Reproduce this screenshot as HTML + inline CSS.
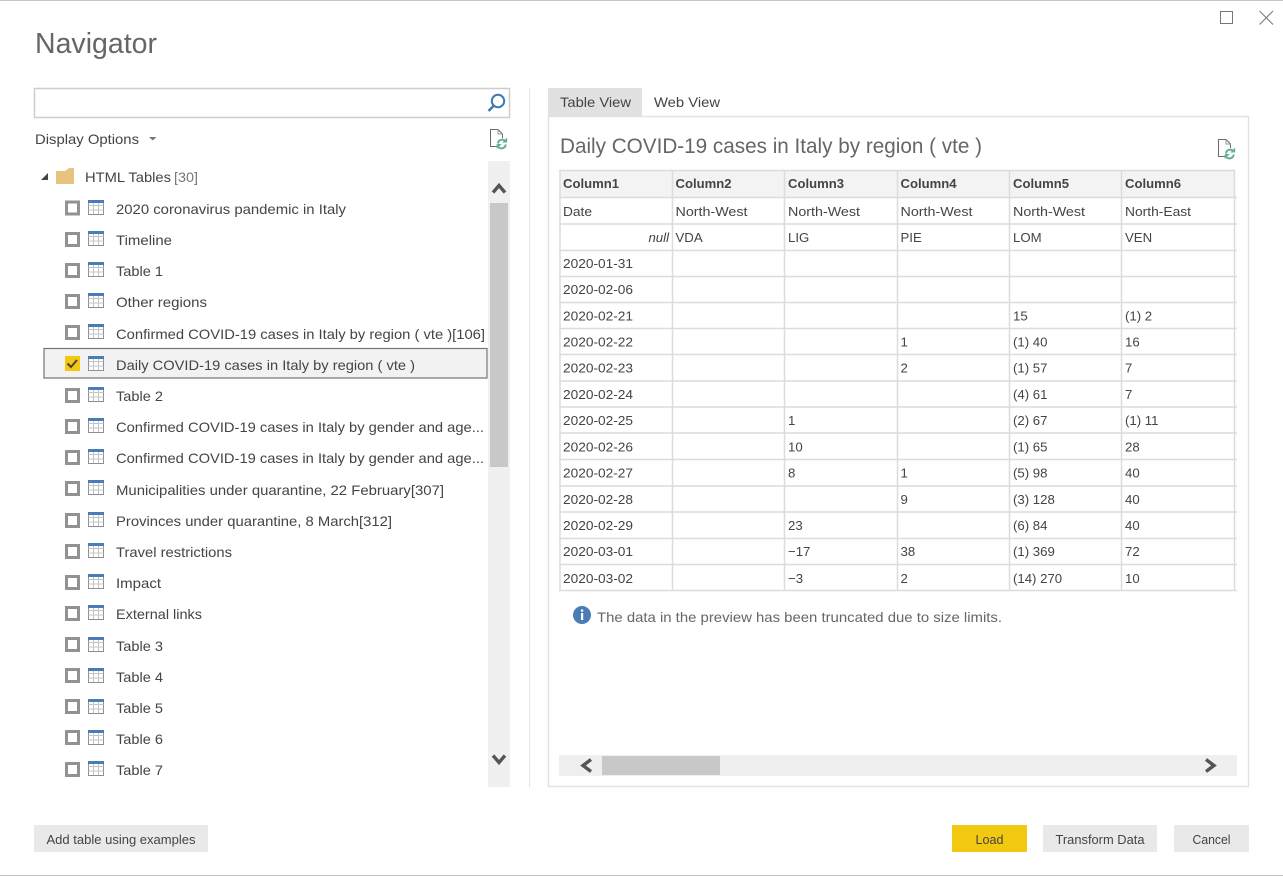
<!DOCTYPE html>
<html lang="en"><head><meta charset="utf-8"><title>Navigator</title>
<style>
html,body{margin:0;padding:0;background:#fff;overflow:hidden}
svg{display:block}
text{font-family:"Liberation Sans",sans-serif;fill:#444}
.l{font-size:14px}
.t text{font-size:13.2px;fill:#444}
.h text{font-size:12.5px;font-weight:bold;fill:#444}
.b{font-size:12.5px;text-anchor:middle;fill:#444}
.g{stroke:#dcdcdc;stroke-width:1.5;fill:none}
</style></head><body>
<svg width="1283" height="876" viewBox="0 0 1283 876" xmlns="http://www.w3.org/2000/svg">
<defs>
<g id="cb"><rect x="66.5" y="-6.5" width="12" height="12" fill="#fff" stroke="#929292" stroke-width="3"/></g>
<g id="ti"><rect x="88.5" y="-7.5" width="15" height="14" fill="#fff" stroke="#8f8f8f"/><path d="M88.5-2.500h15M88.5 2h15M93.500-6v12M98.500-6v12" stroke="#c4c4c4" fill="none"/><rect x="88" y="-8" width="16" height="3" fill="#4a7db5"/></g>
<g id="rf"><path d="M7 17.500H.5V.5H8L12.500 5V9" fill="none" stroke="#6a6a6a"/><path d="M8 .5V5h4.500" fill="none" stroke="#9a9a9a"/><path d="M8 14.500a4.200 4.200 0 0 1 7.300-2.500M15.700 15.500a4.200 4.200 0 0 1-7.300 2.500" fill="none" stroke="#63b095" stroke-width="2"/><path d="M17.200 8.500v5h-5zM6.700 20v-5h5z" fill="#63b095"/></g>
</defs>
<rect x="0" y="0" width="1283" height="1" fill="#c8c8c8"/>
<rect x="0" y="875" width="1283" height="1" fill="#c0c0c0"/>
<text x="35" y="53" style="font-size:29px;fill:#666" textLength="122" lengthAdjust="spacingAndGlyphs">Navigator</text>
<rect x="1220.500" y="11.500" width="12" height="12" fill="none" stroke="#777"/>
<path d="M1259.500 11l13.500 13.500M1273 11l-13.500 13.500" stroke="#777" fill="none"/>
<rect x="34.500" y="88.500" width="475" height="29" fill="#fff" stroke="#cdcdcd" stroke-width="1.500"/>
<circle cx="498" cy="101" r="6.200" fill="none" stroke="#3f7ab0" stroke-width="2"/><path d="M493.500 106l-5 5" stroke="#3f7ab0" stroke-width="2.600" fill="none"/>
<text class="l" x="35" y="144" textLength="104" lengthAdjust="spacingAndGlyphs">Display Options</text>
<path d="M149 137h7.500l-3.750 3.500z" fill="#777"/>
<use href="#rf" x="490" y="129"/>
<path d="M48 173v7h-7z" fill="#444"/>
<path d="M56 184v-13h9l4-3h5v16z" fill="#e8c27f"/>
<text class="l" x="85" y="182" textLength="86" lengthAdjust="spacingAndGlyphs">HTML Tables</text>
<text class="l" x="174" y="182" textLength="24" lengthAdjust="spacingAndGlyphs" style="fill:#777">[30]</text>

<rect x="44" y="348.500" width="443" height="29.500" fill="#f2f2f2" stroke="#747474" stroke-width="1.200"/>

<use href="#cb" y="208.500"/><use href="#ti" y="208"/><text class="l" x="116" y="214" textLength="230" lengthAdjust="spacingAndGlyphs">2020 coronavirus pandemic in Italy</text>
<use href="#cb" y="240"/><use href="#ti" y="239"/><text class="l" x="116" y="245" textLength="56" lengthAdjust="spacingAndGlyphs">Timeline</text>
<use href="#cb" y="271"/><use href="#ti" y="270"/><text class="l" x="116" y="276" textLength="47" lengthAdjust="spacingAndGlyphs">Table 1</text>
<use href="#cb" y="302"/><use href="#ti" y="301"/><text class="l" x="116" y="307" textLength="91" lengthAdjust="spacingAndGlyphs">Other regions</text>
<use href="#cb" y="333"/><use href="#ti" y="332"/><text class="l" x="116" y="339" textLength="369" lengthAdjust="spacingAndGlyphs">Confirmed COVID-19 cases in Italy by region ( vte )[106]</text>
<rect x="65" y="356" width="15" height="15" fill="#f2c811"/><path d="M67.500 363.500l3.500 3.500 6-7" fill="none" stroke="#444" stroke-width="2"/><use href="#ti" y="364"/><text class="l" x="116" y="370" textLength="299" lengthAdjust="spacingAndGlyphs">Daily COVID-19 cases in Italy by region ( vte )</text>
<use href="#cb" y="396"/><use href="#ti" y="395"/><text class="l" x="116" y="401" textLength="47" lengthAdjust="spacingAndGlyphs">Table 2</text>
<use href="#cb" y="427"/><use href="#ti" y="426"/><text class="l" x="116" y="432" textLength="368" lengthAdjust="spacingAndGlyphs">Confirmed COVID-19 cases in Italy by gender and age...</text>
<use href="#cb" y="458"/><use href="#ti" y="457"/><text class="l" x="116" y="463" textLength="368" lengthAdjust="spacingAndGlyphs">Confirmed COVID-19 cases in Italy by gender and age...</text>
<use href="#cb" y="489"/><use href="#ti" y="488"/><text class="l" x="116" y="495" textLength="328" lengthAdjust="spacingAndGlyphs">Municipalities under quarantine, 22 February[307]</text>
<use href="#cb" y="521"/><use href="#ti" y="520"/><text class="l" x="116" y="526" textLength="276" lengthAdjust="spacingAndGlyphs">Provinces under quarantine, 8 March[312]</text>
<use href="#cb" y="552"/><use href="#ti" y="551"/><text class="l" x="116" y="557" textLength="116" lengthAdjust="spacingAndGlyphs">Travel restrictions</text>
<use href="#cb" y="583"/><use href="#ti" y="582"/><text class="l" x="116" y="588" textLength="45" lengthAdjust="spacingAndGlyphs">Impact</text>
<use href="#cb" y="614"/><use href="#ti" y="613"/><text class="l" x="116" y="619" textLength="86" lengthAdjust="spacingAndGlyphs">External links</text>
<use href="#cb" y="645"/><use href="#ti" y="645"/><text class="l" x="116" y="651" textLength="47" lengthAdjust="spacingAndGlyphs">Table 3</text>
<use href="#cb" y="676"/><use href="#ti" y="676"/><text class="l" x="116" y="682" textLength="47" lengthAdjust="spacingAndGlyphs">Table 4</text>
<use href="#cb" y="707"/><use href="#ti" y="707"/><text class="l" x="116" y="713" textLength="47" lengthAdjust="spacingAndGlyphs">Table 5</text>
<use href="#cb" y="738"/><use href="#ti" y="738"/><text class="l" x="116" y="744" textLength="47" lengthAdjust="spacingAndGlyphs">Table 6</text>
<use href="#cb" y="770"/><use href="#ti" y="769"/><text class="l" x="116" y="775" textLength="47" lengthAdjust="spacingAndGlyphs">Table 7</text>

<rect x="488" y="161" width="22" height="626" fill="#f0f0f0"/>
<rect x="490" y="203" width="18" height="264" fill="#c8c8c8"/>
<path d="M493 192.500l6-7 6 7" fill="none" stroke="#555" stroke-width="3.400"/>
<path d="M493 755.500l6 7 6-7" fill="none" stroke="#555" stroke-width="3.400"/>

<rect x="529" y="88" width="1" height="699" fill="#e6e6e6"/>
<rect x="548.500" y="116.500" width="700" height="670" fill="#fff" stroke="#e2e2e2" stroke-width="1.500"/>
<rect x="548" y="88" width="94" height="29" fill="#e1e1e1"/>
<text class="l" x="560" y="107" textLength="71" lengthAdjust="spacingAndGlyphs">Table View</text>
<text class="l" x="654" y="107" textLength="66" lengthAdjust="spacingAndGlyphs">Web View</text>
<text x="560" y="153" style="font-size:21px;fill:#666" textLength="422" lengthAdjust="spacingAndGlyphs">Daily COVID-19 cases in Italy by region ( vte )</text>
<use href="#rf" x="1218" y="139"/>

<rect x="560" y="170" width="675" height="27" fill="#f3f3f3"/>
<path class="g" d="M559 170.500H1235M559 197.500H1237M559 224H1237M559 250.500H1237M559 276.500H1237M559 302.500H1237M559 328.500H1237M559 354.500H1237M559 381H1237M559 407H1237M559 433H1237M559 459.500H1237M559 486H1237M559 512H1237M559 538.500H1237M559 564.500H1237M559 590.500H1237"/>
<path class="g" d="M560 170V591M672.500 170V591M784.500 170V591M897.500 170V591M1009.500 170V591M1121.500 170V591M1234.500 170V591"/>
<g class="h">
<text x="563" y="188" textLength="56" lengthAdjust="spacingAndGlyphs">Column1</text>
<text x="675.500" y="188" textLength="56" lengthAdjust="spacingAndGlyphs">Column2</text>
<text x="788" y="188" textLength="56" lengthAdjust="spacingAndGlyphs">Column3</text>
<text x="900.500" y="188" textLength="56" lengthAdjust="spacingAndGlyphs">Column4</text>
<text x="1013" y="188" textLength="56" lengthAdjust="spacingAndGlyphs">Column5</text>
<text x="1125" y="188" textLength="56" lengthAdjust="spacingAndGlyphs">Column6</text>
</g>
<g class="t">
<text x="563" y="216" textLength="29" lengthAdjust="spacingAndGlyphs">Date</text>
<text x="675.500" y="216" textLength="72" lengthAdjust="spacingAndGlyphs">North-West</text>
<text x="788" y="216" textLength="72" lengthAdjust="spacingAndGlyphs">North-West</text>
<text x="900.500" y="216" textLength="72" lengthAdjust="spacingAndGlyphs">North-West</text>
<text x="1013" y="216" textLength="72" lengthAdjust="spacingAndGlyphs">North-West</text>
<text x="1125" y="216" textLength="66" lengthAdjust="spacingAndGlyphs">North-East</text>
<text x="669" y="242" text-anchor="end" style="font-style:italic">null</text>
<text x="675.500" y="242">VDA</text><text x="788" y="242">LIG</text><text x="900.500" y="242">PIE</text><text x="1013" y="242">LOM</text><text x="1125" y="242">VEN</text>
<text x="563" y="268" textLength="70" lengthAdjust="spacingAndGlyphs">2020-01-31</text>
<text x="563" y="294" textLength="70" lengthAdjust="spacingAndGlyphs">2020-02-06</text>
<text x="563" y="320.500" textLength="70" lengthAdjust="spacingAndGlyphs">2020-02-21</text><text x="1013" y="320.500">15</text><text x="1125" y="320.500">(1) 2</text>
<text x="563" y="346.500" textLength="70" lengthAdjust="spacingAndGlyphs">2020-02-22</text><text x="900.500" y="346.500">1</text><text x="1013" y="346.500">(1) 40</text><text x="1125" y="346.500">16</text>
<text x="563" y="372.500" textLength="70" lengthAdjust="spacingAndGlyphs">2020-02-23</text><text x="900.500" y="372.500">2</text><text x="1013" y="372.500">(1) 57</text><text x="1125" y="372.500">7</text>
<text x="563" y="399" textLength="70" lengthAdjust="spacingAndGlyphs">2020-02-24</text><text x="1013" y="399">(4) 61</text><text x="1125" y="399">7</text>
<text x="563" y="425" textLength="70" lengthAdjust="spacingAndGlyphs">2020-02-25</text><text x="788" y="425">1</text><text x="1013" y="425">(2) 67</text><text x="1125" y="425">(1) 11</text>
<text x="563" y="451.500" textLength="70" lengthAdjust="spacingAndGlyphs">2020-02-26</text><text x="788" y="451.500">10</text><text x="1013" y="451.500">(1) 65</text><text x="1125" y="451.500">28</text>
<text x="563" y="477.500" textLength="70" lengthAdjust="spacingAndGlyphs">2020-02-27</text><text x="788" y="477.500">8</text><text x="900.500" y="477.500">1</text><text x="1013" y="477.500">(5) 98</text><text x="1125" y="477.500">40</text>
<text x="563" y="504" textLength="70" lengthAdjust="spacingAndGlyphs">2020-02-28</text><text x="900.500" y="504">9</text><text x="1013" y="504">(3) 128</text><text x="1125" y="504">40</text>
<text x="563" y="530" textLength="70" lengthAdjust="spacingAndGlyphs">2020-02-29</text><text x="788" y="530">23</text><text x="1013" y="530">(6) 84</text><text x="1125" y="530">40</text>
<text x="563" y="556" textLength="70" lengthAdjust="spacingAndGlyphs">2020-03-01</text><text x="788" y="556">−17</text><text x="900.500" y="556">38</text><text x="1013" y="556">(1) 369</text><text x="1125" y="556">72</text>
<text x="563" y="583" textLength="70" lengthAdjust="spacingAndGlyphs">2020-03-02</text><text x="788" y="583">−3</text><text x="900.500" y="583">2</text><text x="1013" y="583">(14) 270</text><text x="1125" y="583">10</text>
</g>
<circle cx="582" cy="615" r="9" fill="#4a7db5"/>
<rect x="581" y="613" width="2.200" height="7" fill="#fff"/><rect x="581" y="609.500" width="2.200" height="2.200" fill="#fff"/>
<text class="l" x="597" y="622" textLength="405" lengthAdjust="spacingAndGlyphs" style="fill:#666">The data in the preview has been truncated due to size limits.</text>

<rect x="559" y="755" width="678" height="21" fill="#efefef"/>
<rect x="602" y="756" width="118" height="19" fill="#c8c8c8"/>
<path d="M591 759.500l-8 6 8 6" fill="none" stroke="#555" stroke-width="3.400"/>
<path d="M1206 759.500l8 6-8 6" fill="none" stroke="#555" stroke-width="3.400"/>

<rect x="34" y="825" width="174" height="27" fill="#e9e9e9"/>
<text class="b" x="121" y="844" textLength="149" lengthAdjust="spacingAndGlyphs">Add table using examples</text>
<rect x="952" y="825" width="75" height="27" fill="#f2c811"/>
<text class="b" x="989.500" y="844" textLength="28" lengthAdjust="spacingAndGlyphs">Load</text>
<rect x="1043" y="825" width="114" height="27" fill="#e9e9e9"/>
<text class="b" x="1100" y="844" textLength="89" lengthAdjust="spacingAndGlyphs">Transform Data</text>
<rect x="1174" y="825" width="75" height="27" fill="#e9e9e9"/>
<text class="b" x="1211.500" y="844" textLength="38" lengthAdjust="spacingAndGlyphs">Cancel</text>
</svg>
</body></html>
